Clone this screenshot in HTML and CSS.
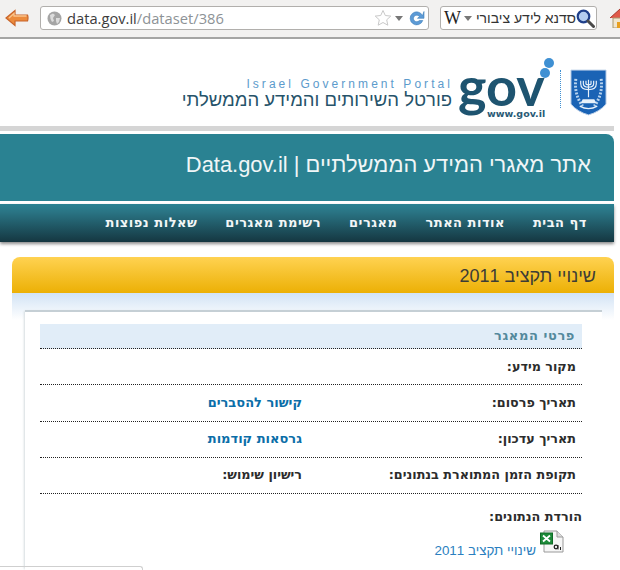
FILE: index.html
```html
<!DOCTYPE html>
<html lang="he">
<head>
<meta charset="utf-8">
<title>שינויי תקציב 2011</title>
<link rel="stylesheet" href="styles.css">
</head>
<body>
<div class="toolbar">
  <svg class="back" width="24" height="20" viewBox="0 0 24 20"><path d="M1 10 10 2.500V7H22.500Q23.500 10 22.500 13H10V17.500Z" fill="#ec8b3c" stroke="#c8642a" stroke-width="1.200"/><path d="M4 10 9 5.500V8H21.500" fill="none" stroke="#f9c48d" stroke-width="1.300"/></svg>
  <div class="urlbar">
    <svg class="globe" width="15" height="15" viewBox="0 0 15 15"><circle cx="7.500" cy="7.500" r="7" fill="#a5a5a5"/><path d="M3 4 6 2.500 8 4 6 7 7 10 5 11 3.500 8ZM9 7h4l-1 4-2 2-1-3Z" fill="#dcdcdc"/></svg>
    <span class="url"><span class="host">data.gov.il</span><span class="path">/dataset/386</span></span>
    <svg class="star" width="18" height="18" viewBox="0 0 18 18"><path d="M9 1.500 11.300 6.500 16.800 7.100 12.700 10.800 13.800 16.200 9 13.500 4.200 16.200 5.300 10.800 1.200 7.100 6.700 6.500Z" fill="#fff" stroke="#c9c9c9"/></svg>
    <span class="drop"></span>
    <svg class="reload" width="17" height="17" viewBox="0 0 17 17"><path d="M14.500 5.500A6.500 6.500 0 1 0 14.800 10.500H11.300A3.300 3.300 0 1 1 11.400 6.500L9.500 8.300H16V1.500Z" fill="#5d9bd6" stroke="#3f7fba" stroke-width=".6"/></svg>
  </div>
  <div class="searchbar">
    <span class="wiki">W</span>
    <span class="drop"></span>
    <span class="query">סדנא לידע ציבורי</span>
    <svg class="mag" width="19" height="19" viewBox="0 0 19 19"><circle cx="7.500" cy="7.500" r="5.800" fill="#b4cdf0" stroke="#1f3f8a" stroke-width="2.200"/><path d="M12 12 17.500 17.500" stroke="#4a4a4a" stroke-width="3" stroke-linecap="round"/></svg>
  </div>
  <svg class="home" width="18" height="20" viewBox="0 0 18 20"><path d="M0 10 10 1 20 10" fill="#e05a4a" stroke="#a83a30"/><path d="M3 10H17V20H3Z" fill="#f0e6d0" stroke="#a89870"/><path d="M7 14h5v6H7Z" fill="#e8a020"/></svg>
</div>

<header class="brand">
  <div class="brand-text">
    <div class="portal" dir="ltr">Israel Government Portal</div>
    <div class="portal-he">פורטל השירותים והמידע הממשלתי</div>
  </div>
  <div class="logo">
    <span class="gov" dir="ltr">gov</span>
    <span class="www" dir="ltr">www.gov.il</span>
    <span class="dot dot-a"></span>
    <span class="dot dot-b"></span>
  </div>
  <div class="divider"></div>
  <svg class="emblem" width="37" height="47" viewBox="0 0 38 48">
    <path d="M1 1H37V36Q30 44 19 47Q8 44 1 36Z" fill="#1a63b5" stroke="#bcd0e8"/>
    <path d="M6 10Q4 26 13 38M32 10Q34 26 25 38" fill="none" stroke="#b9d4ef" stroke-width="3" stroke-dasharray="2 1.500"/>
    <path d="M19 11V29M11 12V15Q11 21 19 21Q27 21 27 15V12M13.700 12V15Q13.700 18.500 19 18.500Q24.300 18.500 24.300 15V12M16.400 12V15Q16.400 16 19 16Q21.600 16 21.600 15V12" fill="none" stroke="#e8f1fa" stroke-width="1.200"/>
    <path d="M13 31H25L27 35H11Z" fill="#e8f1fa"/>
    <path d="M10 38Q19 43 28 38" fill="none" stroke="#e8f1fa" stroke-width="1.300"/>
  </svg>
</header>
<div class="rule"></div>

<div class="banner"><h1>אתר מאגרי המידע הממשלתיים | Data.gov.il</h1></div>

<nav class="nav">
  <a>דף הבית</a>
  <a>אודות האתר</a>
  <a>מאגרים</a>
  <a>רשימת מאגרים</a>
  <a>שאלות נפוצות</a>
</nav>

<main class="panel">
  <h2 class="panel-title">שינויי תקציב 2011</h2>
  <div class="panel-body">
    <div class="card">
      <h3 class="section">פרטי המאגר</h3>
      <div class="row"><b>מקור מידע:</b></div>
      <div class="row"><b>תאריך פרסום:</b><a class="col2">קישור להסברים</a></div>
      <div class="row"><b>תאריך עדכון:</b><a class="col2">גרסאות קודמות</a></div>
      <div class="row"><b>תקופת הזמן המתוארת בנתונים:</b><b class="col2">רישיון שימוש:</b></div>
      <div class="downloads">
        <b>הורדת הנתונים:</b>
        <div class="file">
          <svg width="24" height="24" viewBox="0 0 24 24"><path d="M4 1H17L23 7V22H4Z" fill="#f6f6f6" stroke="#9a9a9a"/><path d="M17 1V7H23" fill="#ddd" stroke="#9a9a9a"/><rect x="0.500" y="3" width="12" height="11" fill="#1d8a3a" stroke="#0f6a25"/><path d="M3 5.500 10 11.500M10 5.500 3 11.500" stroke="#fff" stroke-width="1.800"/><circle cx="16" cy="17" r="1.800" fill="none" stroke="#222" stroke-width="1.300"/><path d="M18 15V19.500M20.500 17V20" stroke="#222" stroke-width="1"/></svg>
          <a>שינויי תקציב 2011</a>
        </div>
      </div>
    </div>
  </div>
</main>
<div class="footer-edge"></div>
</body>
</html>
```

FILE: styles.css
```css
html, body { margin: 0; padding: 0; background: #fff; }
body { width: 620px; height: 570px; overflow: hidden; font-family: "DejaVu Sans", sans-serif; }
h1, h2, h3 { margin: 0; font-weight: normal; }

.toolbar { box-sizing: border-box; height: 39px; display: flex; align-items: center; gap: 11px; padding: 0 0 1px 5px; background: #f2f1f0; border-bottom: 2px solid #a5a5a4; overflow: hidden; }
.back { flex: none; margin-top: -1px; }
.urlbar, .searchbar { box-sizing: border-box; height: 24px; flex: none; display: flex; align-items: center; background: #fff; border: 1px solid #b1afac; border-radius: 3px; }
.urlbar { width: 389px; padding: 0 3px 0 6px; }
.globe { flex: none; }
.url { flex: 1; margin-left: 5px; font: 14.700px "Open Sans", "DejaVu Sans", sans-serif; white-space: nowrap; }
.host { color: #3c3c3c; }
.path { color: #8d9296; }
.star { margin-right: 3px; }
.drop { width: 0; height: 0; border: 4px solid transparent; border-top: 5px solid #777; border-bottom: 0; }
.reload { margin-left: 5px; }
.searchbar { width: 157px; padding: 0 0 0 3px; }
.wiki { font: 18px "Liberation Serif", serif; color: #222; margin-right: 3px; }
.query { flex: 1; direction: rtl; font: 14px "Liberation Sans", sans-serif; color: #333; white-space: nowrap; }
.mag { flex: none; margin-right: 1px; }
.home { flex: none; margin-left: 2px; }

.brand { display: flex; justify-content: flex-end; align-items: flex-start; height: 87px; padding-right: 13px; }
.brand-text { margin-top: 38px; text-align: right; }
.portal { font: 12px/14px "Liberation Sans", sans-serif; letter-spacing: 3.050px; color: #5c9bcc; margin-right: -1px; }
.portal-he { font: 18.500px/18px "Liberation Sans", sans-serif; color: #26536a; white-space: nowrap; direction: rtl; }
.logo { position: relative; width: 102px; height: 87px; margin-left: 6px; }
.gov { position: absolute; left: 0; top: 25px; font: 700 54px/44px Lato, sans-serif; color: #1e5470; }
.www { position: absolute; left: 29px; top: 70px; font: bold 9.500px/10px "DejaVu Sans", sans-serif; color: #2a5a76; }
.dot { position: absolute; border-radius: 50%; background: #3f90d3; }
.dot-a { left: 86px; top: 19px; width: 10px; height: 10px; }
.dot-b { left: 82px; top: 29px; width: 10px; height: 10px; }
.divider { width: 0; height: 38px; margin: 31px 9px 0 0; border-left: 1px dotted #3f90d3; }
.emblem { margin-top: 30px; flex: none; }

.rule { width: 614px; height: 5px; background: #d5d5d5; }

.banner { box-sizing: border-box; width: 614px; height: 67px; margin-top: 3px; background: #2a8292; border-top-right-radius: 8px; direction: rtl; padding: 17px 23px 0 0; }
.banner h1 { font: 21.900px/28px "Liberation Sans", sans-serif; color: #f0f6f7; }

.nav { box-sizing: border-box; width: 614px; height: 38px; margin-top: 3px; display: flex; direction: rtl; align-items: center; padding: 0 27px 0 0; gap: 28px; background: linear-gradient(#2a8292, #2a7585 20%, #153741); box-shadow: 0 2px 3px rgba(0, 0, 0, .45); }
.nav a { font: bold 13px/16px "DejaVu Sans", sans-serif; letter-spacing: .5px; color: #f2f6f7; white-space: nowrap; }

.panel { width: 602px; margin: 15px 0 0 12px; }
.panel-title { box-sizing: border-box; height: 36px; direction: rtl; padding: 5px 18px 0 0; border-radius: 8px 8px 0 0; background: linear-gradient(#ffd251, #ecb005); font: 18px/28px "Liberation Sans", sans-serif; color: #3c3c36; }
.panel-body { padding: 17px 12px 0 13px; background: linear-gradient(#d2e3f5, #fff 27px) no-repeat; background-size: 100% 28px; }
.card { box-sizing: border-box; width: 577px; height: 260px; padding: 12px 20px 0 15px; background: #fff; border-top: 2px solid #c5cfd5; box-shadow: -2px 0 2px -1px #d5dcdf; direction: rtl; }
.section { box-sizing: border-box; height: 25px; padding-right: 7px; background: #e1edf8; border-bottom: 1px dotted #222; font: bold 13px/24px "DejaVu Sans", sans-serif; color: #54899c; letter-spacing: .6px; }
.row { box-sizing: border-box; height: 36.250px; padding-right: 6px; display: grid; grid-template-columns: 274px 1fr; align-items: center; border-bottom: 1px dotted #222; }
.row b { font: bold 12.750px/16px "DejaVu Sans", sans-serif; color: #2c2c2c; }
.row a { font: bold 13px/16px "DejaVu Sans", sans-serif; color: #0b6ea8; }
.downloads { padding-top: 14px; }
.downloads b { display: block; font: bold 12.800px/18px "DejaVu Sans", sans-serif; color: #2c2c2c; }
.file { display: flex; align-items: flex-end; padding-right: 18px; margin-top: 4px; gap: 4px; }
.file svg { flex: none; }
.file a { font: 13.400px/16px "Liberation Sans", sans-serif; color: #2b7fc0; margin-bottom: -5px; }
.footer-edge { position: absolute; left: 0; top: 566px; width: 143px; height: 8px; box-sizing: border-box; border-top: 1px solid #cfcfcf; border-right: 1px solid #cfcfcf; border-top-right-radius: 3px; }
```
